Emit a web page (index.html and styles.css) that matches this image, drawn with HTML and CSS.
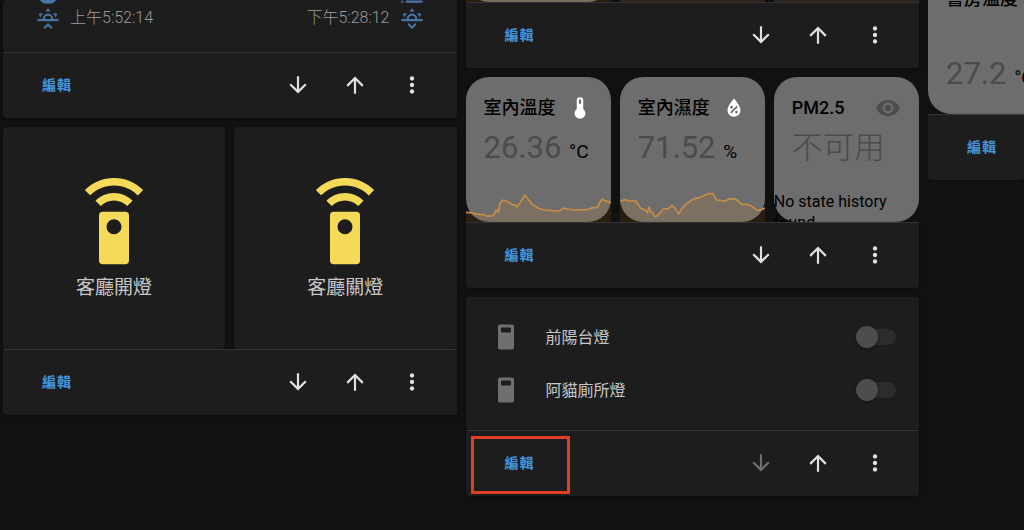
FILE: index.html
```
<!DOCTYPE html>
<html lang="zh-Hant">

<head>
    <meta charset="UTF-8">
    <meta name="viewport" content="width=device-width, initial-scale=1.0">
    <title>Home Assistant</title>
    <link rel="stylesheet" href="styles.css">
</head>

<body>
    <svg class="sprite" aria-hidden="true">
        <symbol id="arrow-down" viewBox="0 0 24 24">
            <path d="M11,4H13V16L18.5,10.5L19.92,11.92L12,19.84L4.08,11.92L5.5,10.5L11,16V4Z" />
        </symbol>
        <symbol id="arrow-up" viewBox="0 0 24 24">
            <path d="M13,20H11V8L5.5,13.5L4.08,12.08L12,4.16L19.92,12.08L18.5,13.5L13,8V20Z" />
        </symbol>
        <symbol id="dots" viewBox="0 0 24 24">
            <circle cx="12" cy="6" r="2" />
            <circle cx="12" cy="12" r="2" />
            <circle cx="12" cy="18" r="2" />
        </symbol>
        <symbol id="sunrise" viewBox="0 0 24 24">
            <path d="M3,12H7A5,5 0 0,1 12,7A5,5 0 0,1 17,12H21A1,1 0 0,1 22,13A1,1 0 0,1 21,14H3A1,1 0 0,1 2,13A1,1 0 0,1 3,12M15,12A3,3 0 0,0 12,9A3,3 0 0,0 9,12H15M12,2L14.39,5.42C13.65,5.15 12.84,5 12,5C11.16,5 10.35,5.15 9.61,5.42L12,2M3.34,7L7.5,6.65C6.9,7.16 6.36,7.78 5.94,8.5C5.5,9.24 5.25,10 5.11,10.79L3.34,7M20.65,7L18.88,10.79C18.74,10 18.47,9.23 18.05,8.5C17.63,7.78 17.1,7.15 16.5,6.64L20.65,7M12.71,16.3L15.82,19.41C16.21,19.8 16.21,20.43 15.82,20.82C15.43,21.21 14.8,21.21 14.41,20.82L12,18.41L9.59,20.82C9.2,21.21 8.57,21.21 8.18,20.82C7.79,20.43 7.79,19.8 8.18,19.41L11.29,16.3C11.5,16.1 11.74,16 12,16C12.26,16 12.5,16.1 12.71,16.3Z" />
        </symbol>
        <symbol id="sunset" viewBox="0 0 24 24">
            <path d="M3,12H7A5,5 0 0,1 12,7A5,5 0 0,1 17,12H21A1,1 0 0,1 22,13A1,1 0 0,1 21,14H3A1,1 0 0,1 2,13A1,1 0 0,1 3,12M15,12A3,3 0 0,0 12,9A3,3 0 0,0 9,12H15M12,2L14.39,5.42C13.65,5.15 12.84,5 12,5C11.16,5 10.35,5.15 9.61,5.42L12,2M3.34,7L7.5,6.65C6.9,7.16 6.36,7.78 5.94,8.5C5.5,9.24 5.25,10 5.11,10.79L3.34,7M20.65,7L18.88,10.79C18.74,10 18.47,9.23 18.05,8.5C17.63,7.78 17.1,7.15 16.5,6.64L20.65,7M12.71,20.71L15.82,17.6C16.21,17.21 16.21,16.57 15.82,16.18C15.43,15.79 14.8,15.79 14.41,16.18L12,18.59L9.59,16.18C9.2,15.79 8.57,15.79 8.18,16.18C7.79,16.57 7.79,17.21 8.18,17.6L11.29,20.71C11.5,20.9 11.74,21 12,21C12.26,21 12.5,20.9 12.71,20.71Z" />
        </symbol>
        <symbol id="disc" viewBox="0 0 24 24">
            <circle cx="12" cy="12" r="10" />
        </symbol>
        <symbol id="fog" viewBox="0 0 24 24">
            <rect x="2" y="19" width="2" height="2" rx="1" />
            <rect x="6" y="19" width="16" height="2" rx="1" />
        </symbol>
        <symbol id="remote" viewBox="0 0 24 24">
            <path d="M12,0C8.96,0 6.21,1.23 4.22,3.22L5.63,4.63C7.26,3 9.5,2 12,2C14.5,2 16.74,3 18.36,4.64L19.77,3.23C17.79,1.23 15.04,0 12,0M7.05,6.05L8.46,7.46C9.37,6.56 10.62,6 12,6C13.38,6 14.63,6.56 15.54,7.46L16.95,6.05C15.68,4.78 13.93,4 12,4C10.07,4 8.32,4.78 7.05,6.05M12,15A2,2 0 0,1 10,13A2,2 0 0,1 12,11A2,2 0 0,1 14,13A2,2 0 0,1 12,15M15,9H9A1,1 0 0,0 8,10V22A1,1 0 0,0 9,23H15A1,1 0 0,0 16,22V10A1,1 0 0,0 15,9Z" />
        </symbol>
        <symbol id="thermometer" viewBox="0 0 24 24">
            <path d="M15,13V5A3,3 0 0,0 9,5V13A5,5 0 1,0 15,13M12,4A1,1 0 0,1 13,5V8H11V5A1,1 0 0,1 12,4Z" />
        </symbol>
        <symbol id="water-percent" viewBox="0 0 24 24">
            <path d="M12,3.25C12,3.25 6,10 6,14C6,17.32 8.69,20 12,20A6,6 0 0,0 18,14C18,10 12,3.25 12,3.25M14.47,9.97L15.53,11.03L9.53,17.03L8.47,15.97M9.75,10A1.25,1.25 0 0,1 11,11.25A1.25,1.25 0 0,1 9.75,12.5A1.25,1.25 0 0,1 8.5,11.25A1.25,1.25 0 0,1 9.75,10M14.25,14.5A1.25,1.25 0 0,1 15.5,15.75A1.25,1.25 0 0,1 14.25,17A1.25,1.25 0 0,1 13,15.75A1.25,1.25 0 0,1 14.25,14.5Z" />
        </symbol>
        <symbol id="eye" viewBox="0 0 24 24">
            <path d="M12,9A3,3 0 0,0 9,12A3,3 0 0,0 12,15A3,3 0 0,0 15,12A3,3 0 0,0 12,9M12,17A5,5 0 0,1 7,12A5,5 0 0,1 12,7A5,5 0 0,1 17,12A5,5 0 0,1 12,17M12,4.5C7,4.5 2.73,7.61 1,12C2.73,16.39 7,19.5 12,19.5C17,19.5 21.27,16.39 23,12C21.27,7.61 17,4.5 12,4.5Z" />
        </symbol>
        <symbol id="switch" viewBox="0 0 26 26">
            <path fill-rule="evenodd" d="M7,0.5H19A2,2 0 0,1 21,2.5V23.5A2,2 0 0,1 19,25.5H7A2,2 0 0,1 5,23.5V2.5A2,2 0 0,1 7,0.5M9,3.5A1,1 0 0,0 8,4.5V7.5A1,1 0 0,0 9,8.5H17A1,1 0 0,0 18,7.5V4.5A1,1 0 0,0 17,3.5Z" />
        </symbol>
    </svg>

    <main class="view">
        <section class="column">
            <article class="panel">
                <div class="card weather">
                    <div class="weather-row">
                        <svg class="icon"><use href="#disc" /></svg>
                        <svg class="icon"><use href="#fog" /></svg>
                    </div>
                    <div class="weather-row">
                        <span class="sun"><svg class="icon"><use href="#sunrise" /></svg>上午5:52:14</span>
                        <span class="sun">下午5:28:12<svg class="icon"><use href="#sunset" /></svg></span>
                    </div>
                </div>
                <footer class="actions">
                    <button class="edit">編輯</button>
                    <button class="move" aria-label="下移"><svg class="icon"><use href="#arrow-down" /></svg></button>
                    <button class="move" aria-label="上移"><svg class="icon"><use href="#arrow-up" /></svg></button>
                    <button class="move" aria-label="更多"><svg class="icon"><use href="#dots" /></svg></button>
                </footer>
            </article>

            <article class="panel">
                <div class="stack two">
                    <button class="card remote">
                        <svg class="remote-icon"><use href="#remote" /></svg>
                        <span>客廳開燈</span>
                    </button>
                    <button class="card remote">
                        <svg class="remote-icon"><use href="#remote" /></svg>
                        <span>客廳關燈</span>
                    </button>
                </div>
                <footer class="actions">
                    <button class="edit">編輯</button>
                    <button class="move" aria-label="下移"><svg class="icon"><use href="#arrow-down" /></svg></button>
                    <button class="move" aria-label="上移"><svg class="icon"><use href="#arrow-up" /></svg></button>
                    <button class="move" aria-label="更多"><svg class="icon"><use href="#dots" /></svg></button>
                </footer>
            </article>
        </section>

        <section class="column">
            <article class="panel">
                <div class="stack three cut">
                    <div class="sensor"><div class="graph-fill"></div></div>
                    <div class="graph-fill"></div>
                    <div class="graph-fill"></div>
                </div>
                <footer class="actions">
                    <button class="edit">編輯</button>
                    <button class="move" aria-label="下移"><svg class="icon"><use href="#arrow-down" /></svg></button>
                    <button class="move" aria-label="上移"><svg class="icon"><use href="#arrow-up" /></svg></button>
                    <button class="move" aria-label="更多"><svg class="icon"><use href="#dots" /></svg></button>
                </footer>
            </article>

            <article class="panel">
                <div class="stack three">
                    <div class="sensor">
                        <div class="sensor-head">
                            <h2>室內溫度</h2>
                            <svg class="icon"><use href="#thermometer" /></svg>
                        </div>
                        <p class="reading">26.36 <span class="unit">°C</span></p>
                        <svg class="graph" viewBox="0 0 435 120" preserveAspectRatio="none">
                            <path class="area" d="M0,91L12,92L27,95L42,97L54,98L62,102L77,102L85,97L90,84L97,90L101,66L109,55L120,56L132,64L142,69L147,68L153,76L164,59L176,39L185,50L200,68L217,79L237,84L257,86L280,87L290,78L304,81L324,84L362,83L379,77L394,77L402,59L407,52L422,58L435,61V120H0Z" />
                            <path class="line" d="M0,91L12,92L27,95L42,97L54,98L62,102L77,102L85,97L90,84L97,90L101,66L109,55L120,56L132,64L142,69L147,68L153,76L164,59L176,39L185,50L200,68L217,79L237,84L257,86L280,87L290,78L304,81L324,84L362,83L379,77L394,77L402,59L407,52L422,58L435,61" />
                        </svg>
                    </div>
                    <div class="sensor">
                        <div class="sensor-head">
                            <h2>室內濕度</h2>
                            <svg class="icon"><use href="#water-percent" /></svg>
                        </div>
                        <p class="reading">71.52 <span class="unit">%</span></p>
                        <svg class="graph" viewBox="0 0 435 120" preserveAspectRatio="none">
                            <path class="area" d="M0,57L17,53L25,57L47,57L62,79L75,84L82,92L87,75L91,89L97,90L104,104L112,101L130,81L145,80L156,70L165,79L176,96L184,81L200,64L220,51L240,46L265,35L278,35L290,54L315,57L330,50L348,52L365,67L382,67L400,76L412,85L423,83L435,78V120H0Z" />
                            <path class="line" d="M0,57L17,53L25,57L47,57L62,79L75,84L82,92L87,75L91,89L97,90L104,104L112,101L130,81L145,80L156,70L165,79L176,96L184,81L200,64L220,51L240,46L265,35L278,35L290,54L315,57L330,50L348,52L365,67L382,67L400,76L412,85L423,83L435,78" />
                        </svg>
                    </div>
                    <div class="sensor">
                        <div class="sensor-head">
                            <h2>PM2.5</h2>
                            <svg class="icon dim"><use href="#eye" /></svg>
                        </div>
                        <p class="reading unavailable">不可用</p>
                        <p class="no-history">No state history found.</p>
                    </div>
                </div>
                <footer class="actions">
                    <button class="edit">編輯</button>
                    <button class="move" aria-label="下移"><svg class="icon"><use href="#arrow-down" /></svg></button>
                    <button class="move" aria-label="上移"><svg class="icon"><use href="#arrow-up" /></svg></button>
                    <button class="move" aria-label="更多"><svg class="icon"><use href="#dots" /></svg></button>
                </footer>
            </article>

            <article class="panel">
                <div class="card entities">
                    <div class="entity">
                        <svg class="icon"><use href="#switch" /></svg>
                        <label for="balcony">前陽台燈</label>
                        <input type="checkbox" id="balcony" class="toggle">
                    </div>
                    <div class="entity">
                        <svg class="icon"><use href="#switch" /></svg>
                        <label for="cat-toilet">阿貓廁所燈</label>
                        <input type="checkbox" id="cat-toilet" class="toggle">
                    </div>
                </div>
                <footer class="actions marked">
                    <button class="edit">編輯</button>
                    <button class="move" aria-label="下移" disabled><svg class="icon"><use href="#arrow-down" /></svg></button>
                    <button class="move" aria-label="上移"><svg class="icon"><use href="#arrow-up" /></svg></button>
                    <button class="move" aria-label="更多"><svg class="icon"><use href="#dots" /></svg></button>
                </footer>
            </article>
        </section>

        <section class="column">
            <article class="panel">
                <div class="sensor study">
                    <div class="sensor-head">
                        <h2>書房溫度</h2>
                    </div>
                    <p class="reading">27.2 <span class="unit">°C</span></p>
                </div>
                <footer class="actions">
                    <button class="edit">編輯</button>
                </footer>
            </article>
        </section>
    </main>
</body>

</html>
```
FILE: styles.css
```
*,
*::before,
*::after {
    margin: 0;
    padding: 0;
    box-sizing: border-box;
}

body {
    min-height: 100vh;
    background: #111;
    color: #c8c8c8;
    font-family: Roboto, 'Noto Sans CJK TC', sans-serif;
    font-size: 16px;
    overflow: hidden;
}

button {
    background: none;
    border: none;
    color: inherit;
    font-family: inherit;
    cursor: pointer;
}

.sprite {
    display: none;
}

.icon {
    width: 26px;
    height: 26px;
    flex-shrink: 0;
    fill: currentColor;
}

.view {
    display: grid;
    grid-template-columns: minmax(0, 1fr) minmax(0, 1fr) 96px;
    gap: 9px;
    padding-left: 3px;
}

.column {
    display: flex;
    flex-direction: column;
    gap: 9px;
    min-width: 0;
}

.column:last-child {
    overflow: hidden;
}

.card {
    background: #1d1d1d;
    border-radius: 4px;
    box-shadow: 0 1px 3px rgba(0, 0, 0, 0.3);
}

/* Edit bar under each card */
.actions {
    display: flex;
    align-items: center;
    height: 66px;
    padding-right: 16px;
    padding-bottom: 2px;
    background: #1d1d1d;
    border-top: 1px solid #343434;
    border-radius: 0 0 4px 4px;
    box-shadow: 0 1px 3px rgba(0, 0, 0, 0.3);
    position: relative;
}

.edit {
    height: 46px;
    margin-left: 5px;
    margin-right: auto;
    padding: 0 34px 2px;
    color: #4596d8;
    font-size: 14px;
    font-weight: 700;
    letter-spacing: 1px;
    white-space: nowrap;
}

.move {
    display: flex;
    justify-content: center;
    align-items: center;
    width: 57px;
    height: 57px;
    color: #e1e1e1;
}

.move:disabled {
    color: #6f6f6f;
    cursor: default;
}

.marked::after {
    content: '';
    position: absolute;
    top: 5px;
    left: 5px;
    width: 99px;
    height: 58px;
    border: 3px solid #e43d25;
    pointer-events: none;
}

/* Weather */
.weather {
    display: flex;
    flex-direction: column;
    justify-content: flex-end;
    height: 52px;
    padding: 0 32px 20px;
    overflow: hidden;
    color: #9b9b9b;
    font-weight: 300;
}

.weather-row {
    display: flex;
    justify-content: space-between;
}

.weather .icon {
    color: #4a74a5;
}

.sun {
    display: flex;
    gap: 9px;
    line-height: 24px;
}

/* Card stacks */
.stack {
    display: grid;
    gap: 9px;
}

.two {
    grid-template-columns: repeat(2, minmax(0, 1fr));
}

.three {
    grid-template-columns: repeat(3, minmax(0, 1fr));
}

.remote {
    display: flex;
    flex-direction: column;
    justify-content: center;
    align-items: center;
    gap: 6px;
    padding-top: 3px;
    aspect-ratio: 1;
    font-size: 19px;
    line-height: 28px;
}

.remote-icon {
    width: 90px;
    height: 90px;
    fill: #f5d959;
}

/* Sensor cards, the graph is not clipped by the rounded corners */
.sensor {
    aspect-ratio: 1;
    padding: 18px;
    position: relative;
    overflow: hidden;
    color: #000;
    isolation: isolate;
}

.sensor::before {
    content: '';
    position: absolute;
    inset: 0;
    z-index: -1;
    background: #6d6d6d;
    border-radius: 23px;
}

.sensor-head {
    display: flex;
    justify-content: space-between;
    align-items: center;
    height: 26px;
    color: #fff;
}

.sensor-head h2 {
    color: #000;
    font-size: 18px;
    font-weight: 500;
    line-height: 26px;
    white-space: nowrap;
}

.sensor-head .dim {
    color: #4c4c4c;
}

.reading {
    margin-top: 9px;
    color: #4b4b4b;
    font-size: 31px;
    line-height: 36px;
    white-space: nowrap;
}

.unavailable {
    font-weight: 300;
}

.unit {
    color: #000;
    font-size: 19px;
}

.graph {
    position: absolute;
    left: 0;
    bottom: 0;
    width: 100%;
    height: 40px;
}

.area {
    fill: #ff9800;
    opacity: 0.1;
}

.line {
    fill: none;
    stroke: #c68d48;
    stroke-width: 5;
    stroke-linejoin: round;
}

.no-history {
    position: absolute;
    left: 0;
    bottom: 0;
    width: 100%;
    height: 31px;
    overflow: hidden;
    line-height: 21px;
}

.cut {
    height: 2px;
    align-content: end;
    align-items: end;
    overflow: hidden;
}

.graph-fill {
    height: 40px;
    background: #30261f;
}

.sensor .graph-fill {
    position: absolute;
    left: 0;
    right: 0;
    bottom: 0;
    background: rgba(255, 152, 0, 0.1);
}

.study {
    display: flex;
    flex-direction: column;
    justify-content: flex-end;
    width: 454px;
    height: 114px;
    aspect-ratio: auto;
}

.study::before {
    border-radius: 0 0 23px 23px;
}

.study .reading {
    margin-top: 44px;
}

/* Entities */
.entities {
    display: flex;
    flex-direction: column;
    gap: 13px;
    padding: 20px 23px 20px 27px;
}

.entity {
    display: flex;
    align-items: center;
    height: 40px;
}

.entity .icon {
    color: #6f6f6f;
}

.entity label {
    flex: 1;
    margin-left: 27px;
    padding-bottom: 2px;
}

.toggle {
    appearance: none;
    width: 40px;
    height: 22px;
    position: relative;
    cursor: pointer;
}

.toggle::before {
    content: '';
    position: absolute;
    inset: 3px 0;
    background: #2c2c2c;
    border-radius: 8px;
}

.toggle::after {
    content: '';
    position: absolute;
    top: 0;
    left: 0;
    width: 22px;
    height: 22px;
    background: #4d4d4d;
    border-radius: 50%;
    box-shadow: 0 1px 3px rgba(0, 0, 0, 0.4);
}

.toggle:checked::after {
    left: 18px;
}
```
